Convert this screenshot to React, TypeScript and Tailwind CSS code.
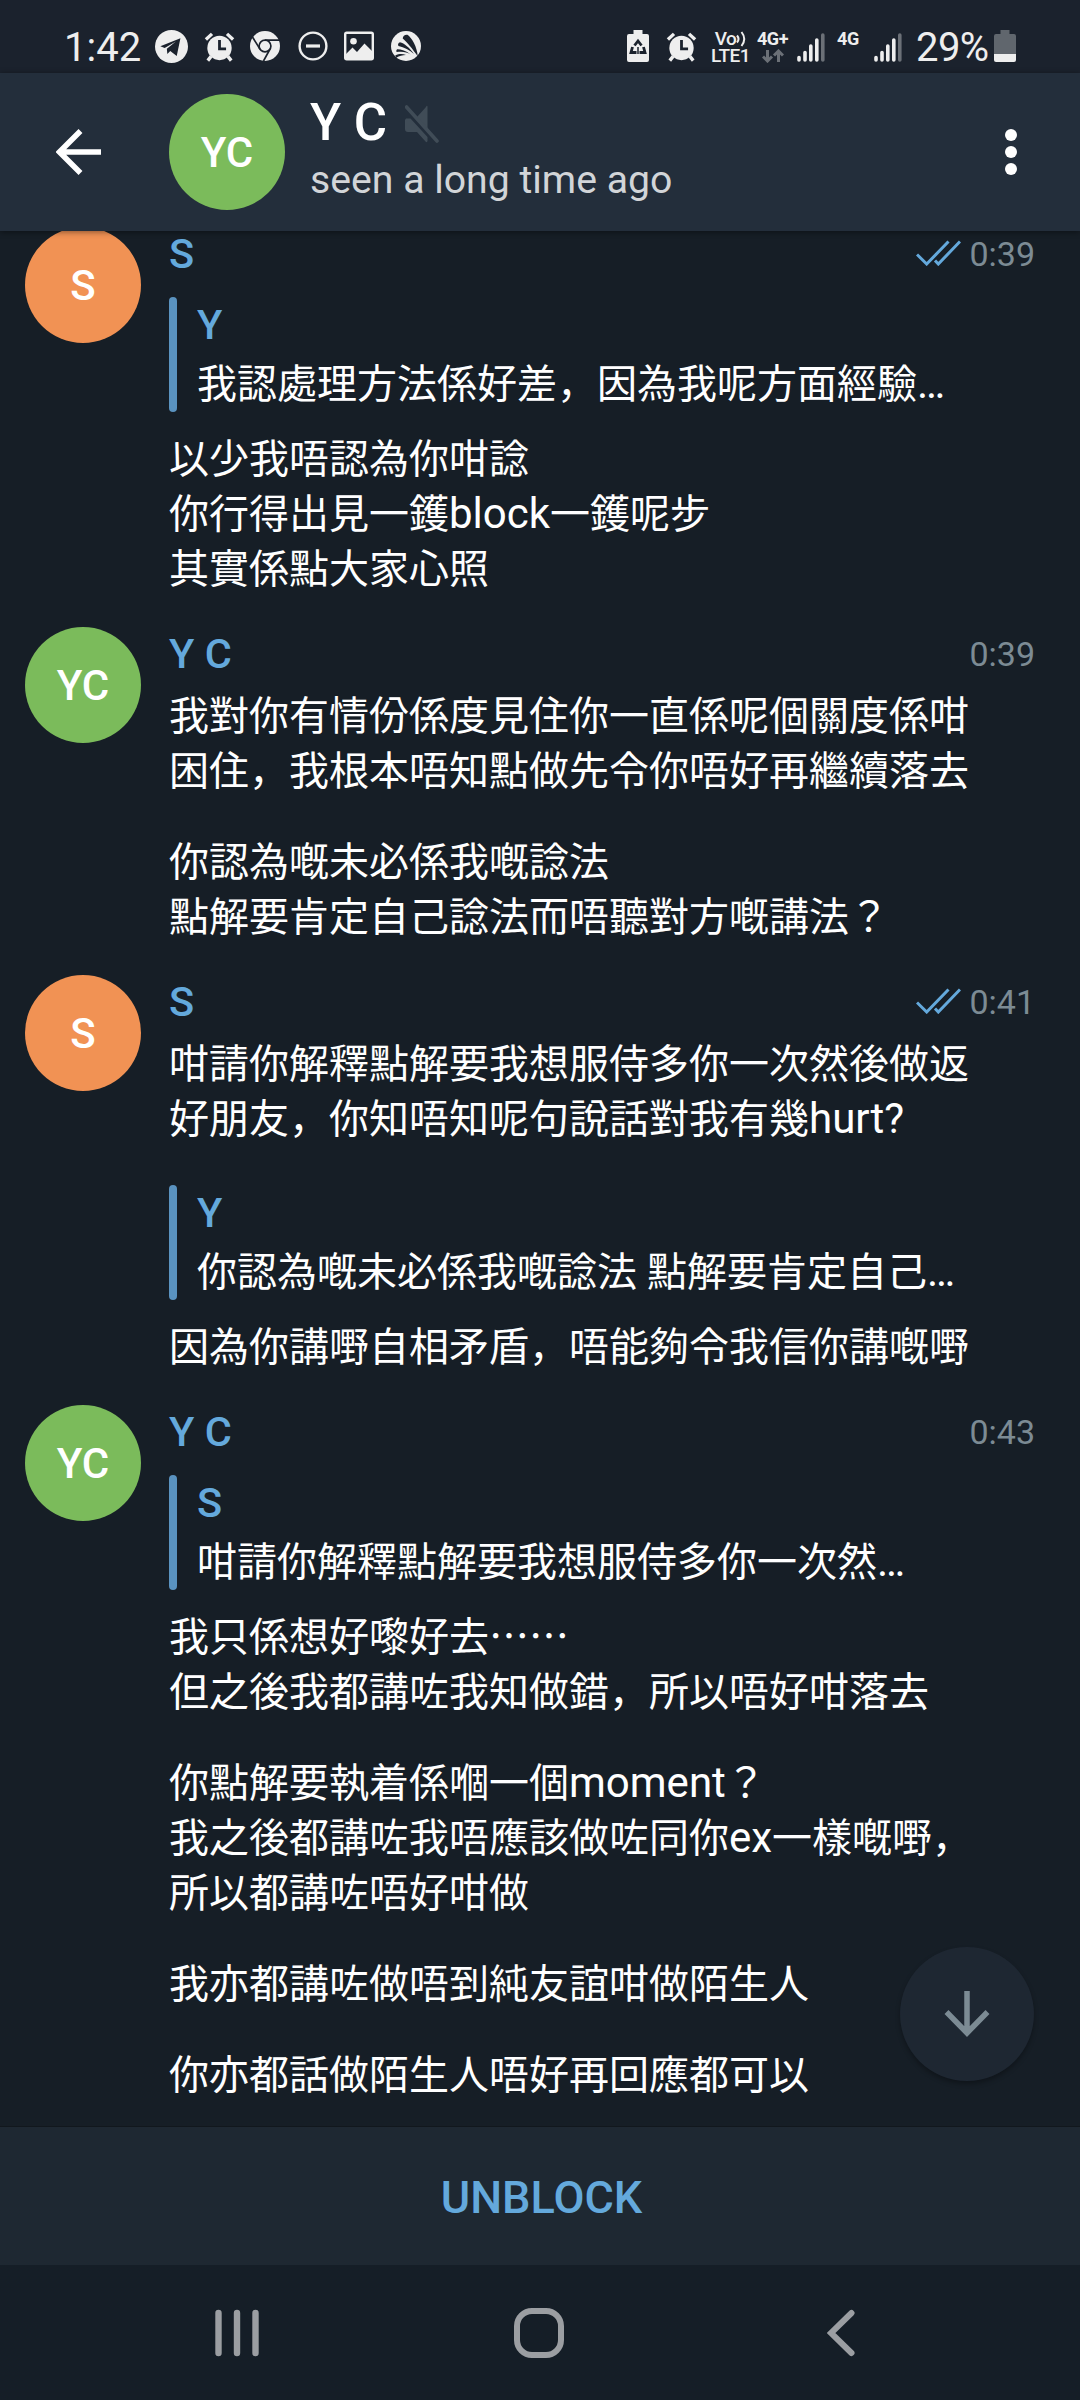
import React from "react";

const TEXT_FONT = "font-['Roboto','Noto_Sans_CJK_JP',sans-serif]";

type Block =
    | { kind: "quote"; author: string; text: string }
    | { kind: "text"; lines: string[] };

interface Message {
    id: number;
    name: string;
    initials: string;
    color: string;
    time: string;
    read?: boolean;
    blocks: Block[];
}

const GREEN = "bg-[#7bbb5b]";
const ORANGE = "bg-[#f19254]";

// An empty string is a blank line inside the message
const MESSAGES: Message[] = [
    {
        id: 1,
        name: "S",
        initials: "S",
        color: ORANGE,
        time: "0:39",
        read: true,
        blocks: [
            { kind: "quote", author: "Y", text: "我認處理方法係好差，因為我呢方面經驗…" },
            { kind: "text", lines: ["以少我唔認為你咁諗", "你行得出見一鑊block一鑊呢步", "其實係點大家心照"] },
        ],
    },
    {
        id: 2,
        name: "Y C",
        initials: "YC",
        color: GREEN,
        time: "0:39",
        blocks: [
            {
                kind: "text",
                lines: [
                    "我對你有情份係度見住你一直係呢個關度係咁",
                    "困住，我根本唔知點做先令你唔好再繼續落去",
                    "",
                    "你認為嘅未必係我嘅諗法",
                    "點解要肯定自己諗法而唔聽對方嘅講法？",
                ],
            },
        ],
    },
    {
        id: 3,
        name: "S",
        initials: "S",
        color: ORANGE,
        time: "0:41",
        read: true,
        blocks: [
            {
                kind: "text",
                lines: ["咁請你解釋點解要我想服侍多你一次然後做返", "好朋友，你知唔知呢句說話對我有幾hurt?"],
            },
            { kind: "quote", author: "Y", text: "你認為嘅未必係我嘅諗法 點解要肯定自己…" },
            { kind: "text", lines: ["因為你講嘢自相矛盾，唔能夠令我信你講嘅嘢"] },
        ],
    },
    {
        id: 4,
        name: "Y C",
        initials: "YC",
        color: GREEN,
        time: "0:43",
        blocks: [
            { kind: "quote", author: "S", text: "咁請你解釋點解要我想服侍多你一次然…" },
            {
                kind: "text",
                lines: [
                    "我只係想好嚟好去⋯⋯",
                    "但之後我都講咗我知做錯，所以唔好咁落去",
                    "",
                    "你點解要執着係嗰一個moment？",
                    "我之後都講咗我唔應該做咗同你ex一樣嘅嘢，",
                    "所以都講咗唔好咁做",
                    "",
                    "我亦都講咗做唔到純友誼咁做陌生人",
                    "",
                    "你亦都話做陌生人唔好再回應都可以",
                ],
            },
        ],
    },
];

function AlarmIcon({ className }: { className?: string }) {
    return (
        <svg viewBox="0 0 32 32" className={className} fill="none">
            <circle cx="16" cy="17" r="13" fill="#eeeeee" />
            <path d="M1.5 8 8 2M30.5 8 24 2" stroke="#eeeeee" strokeWidth="3.6" />
            <path d="M7 26 3.5 30.5M25 26 28.5 30.5" stroke="#eeeeee" strokeWidth="3.6" />
            <path d="M16 8.5V18H23" stroke="#1b222d" strokeWidth="3" />
        </svg>
    );
}

function SignalIcon() {
    return (
        <svg viewBox="0 0 28 30" className="h-[30px] w-7" strokeWidth="3.6" strokeLinecap="round">
            <path d="M2 25.5V28M8 20.5V28M13.8 14V28M19.8 8V28" stroke="#eeeeee" />
            <path d="M25.8 3V28" stroke="#6b7077" />
        </svg>
    );
}

function StatusBar() {
    return (
        <div className="flex h-[73px] shrink-0 items-start bg-[#1b222d] pl-[64px] pt-[30px] text-[#eeeeee]">
            <span className="w-[91px] shrink-0 pt-0.5 text-[40px] leading-8">1:42</span>
            <svg viewBox="0 0 34 34" className="h-[33px] w-[33px]">
                <circle cx="17" cy="17" r="17" fill="#eeeeee" />
                <path d="M5.5 16.7 26.2 8.5 22.4 26.8 15.7 21.6 12.7 24.6 12.2 19.2 21.5 11.8 10 18.6Z" fill="#1b222d" />
            </svg>
            <AlarmIcon className="ml-4 mt-0.5 h-[30px] w-[31px]" />
            <svg viewBox="0 0 32 32" className="ml-[15px] mt-px h-[30px] w-[30px]" fill="none" stroke="#1b222d" strokeWidth="1.8">
                <circle cx="16" cy="16" r="16" fill="#eeeeee" stroke="none" />
                <circle cx="16" cy="16" r="6.3" />
                <path d="M16 9.7H31M10.6 19.2 2.6 6.4M21.4 19.2 14.4 32" />
            </svg>
            <svg viewBox="0 0 30 30" className="ml-[18px] mt-px h-[30px] w-[30px]" fill="none" stroke="#eeeeee">
                <circle cx="15" cy="15" r="13.4" strokeWidth="2.4" />
                <path d="M8 15H22" strokeWidth="3.2" />
            </svg>
            <svg viewBox="0 0 30 30" className="ml-4 mt-px h-[30px] w-[30px]">
                <rect x="1.2" y="1.7" width="27.6" height="26.6" rx="1.5" fill="none" stroke="#eeeeee" strokeWidth="2.4" />
                <circle cx="9.5" cy="10.3" r="3.3" fill="#eeeeee" />
                <path d="M2 23 8.5 16.5 13 21 20.5 12.5 28 20V28H2Z" fill="#eeeeee" />
            </svg>
            {/* Disc with dark fins fanning out from the lower right */}
            <svg viewBox="0 0 32 32" className="ml-[17px] mt-px h-[30px] w-[30px]">
                <circle cx="16" cy="16" r="16" fill="#eeeeee" />
                <path
                    d="M28.5 27C28 17 22 7 17.5 4C15 3.5 12.5 5.5 12.5 8C17 12 23 19 28.5 27ZM24.5 24.5C20 18 14 13 9.5 12C7.5 13 7 14.5 8 16C14 17.5 20 20.5 24.5 24.5ZM21 25C16 21 11 19.5 6.5 19.5C5.5 20.5 5.5 21.5 6 22.5C12 21.5 17 22.5 21 25ZM16 25.5C12 24 9 24 4.5 26L5.5 28.5C9 26.5 12 25.5 16 25.5Z"
                    fill="#1b222d"
                />
            </svg>

            <div className="ml-[206px] flex items-start">
                <svg viewBox="0 0 22 32" className="h-8 w-[22px]">
                    <path d="M6.5 0H15.5V4H20Q22 4 22 6V30Q22 32 20 32H2Q0 32 0 30V6Q0 4 2 4H6.5Z" fill="#eeeeee" />
                    <g fill="none" stroke="#1b222d" strokeWidth="2.8">
                        <path d="M7.5 15.5 11 11 14.5 15.5" />
                        <path d="M5.5 17 4 22.5H9.5M16.5 17 18 22.5H12.5" />
                        <path d="M11 17V24" strokeWidth="1.5" />
                    </g>
                </svg>
                <AlarmIcon className="ml-4 mt-0.5 h-[30px] w-[33px]" />
                <div className="ml-[13px] w-[39px] text-center text-[19px] font-medium leading-[17px] tracking-tight">
                    <div className="flex items-center justify-center">
                        Vo
                        <svg viewBox="0 0 10 16" className="h-4 w-2.5" fill="none" stroke="#eeeeee" strokeWidth="2">
                            <path d="M1 4.5Q4 8 1 11.5M5.5 1Q11 8 5.5 15" />
                        </svg>
                    </div>
                    <div>LTE1</div>
                </div>
                <div className="ml-[7px] flex w-[31px] flex-col items-center">
                    <span className="text-[18px] font-bold leading-[18px] tracking-tight">4G+</span>
                    <svg viewBox="0 0 22 14" className="mt-px h-3.5 w-[22px]" fill="none" stroke="#6b7077" strokeWidth="3">
                        <path d="M5.5 1V12M1 7.5 5.5 12 10 7.5M16.5 13V2M12 6.5 16.5 2 21 6.5" />
                    </svg>
                </div>
                <div className="ml-[9px] mt-0.5">
                    <SignalIcon />
                </div>
                <span className="ml-3 w-[25px] text-[18px] font-bold leading-[18px] tracking-tight">4G</span>
                <div className="ml-3 mt-0.5">
                    <SignalIcon />
                </div>
                <span className="ml-[14px] w-[78px] pt-0.5 text-[40px] leading-8 tracking-[-0.6px]">29%</span>
                <svg viewBox="0 0 22 32" className="h-8 w-[22px] shrink-0">
                    <path d="M6.5 0H15.5V4H20Q22 4 22 6V24H0V6Q0 4 2 4H6.5Z" fill="#60666d" />
                    <path d="M0 24H22V30Q22 32 20 32H2Q0 32 0 30Z" fill="#eeeeee" />
                </svg>
            </div>
        </div>
    );
}

function Avatar({ initials, color }: { initials: string; color: string }) {
    return (
        <div
            className={`flex size-[116px] shrink-0 items-center justify-center rounded-full text-[42px] font-medium text-white ${color}`}
        >
            {initials}
        </div>
    );
}

function ChatHeader() {
    return (
        <header className="relative z-10 flex h-[158px] shrink-0 items-center bg-[#232e3b] pl-14 shadow-[0_1px_6px_rgba(0,0,0,0.45)]">
            <svg viewBox="0 0 46 46" className="h-[46px] w-[46px]" fill="none" stroke="#ffffff" strokeWidth="5.5">
                <path d="M3.5 23H45M24.5 2 3.5 23 24.5 44" />
            </svg>
            <div className="ml-[67px]">
                <Avatar initials="YC" color={GREEN} />
            </div>
            <div className="ml-[25px] flex-1 pb-1.5">
                <div className="flex h-[60px] items-center">
                    <h1 className="text-[51px] font-medium leading-[60px] text-white">Y C</h1>
                    <svg viewBox="0 0 34 38" className="ml-[18px] mt-[3px] h-[38px] w-[34px]">
                        <path d="M22.5 1.5V24L12 12 21 2Q22 0 22.5 1.5ZM1 13.5H5.5L22.5 32V36Q22 38 20.5 36.5L12 27H3Q0 27 0 24V15Z" fill="#404c57" />
                        <path d="M1.5 2 32 36" stroke="#404c57" strokeWidth="3.6" strokeLinecap="round" />
                    </svg>
                </div>
                <p className="mt-px text-[39.2px] leading-[52px] text-[#d2d5d8]">seen a long time ago</p>
            </div>
            <svg viewBox="0 0 12 46" className="mr-[63px] h-[46px] w-3" fill="#ffffff">
                <circle cx="6" cy="6" r="6" />
                <circle cx="6" cy="23" r="6" />
                <circle cx="6" cy="40" r="6" />
            </svg>
        </header>
    );
}

function ReadTicks() {
    return (
        <svg viewBox="0 0 45 26" className="mb-[3px] mr-2 h-[26px] w-[45px]" fill="none" stroke="#64a9dc" strokeWidth="3">
            <path d="M1 14.5 10.7 24 32.5 1.5M19 20.5 22.3 24 44 1.5" />
        </svg>
    );
}

// Latin runs are set a little larger than the Chinese around them
function MixedText({ text }: { text: string }) {
    return (
        <>
            {text.split(/([a-z?…]+)/).map((part, i) =>
                i % 2 === 1 ? (
                    <span key={i} className="text-[42px] leading-none">
                        {part}
                    </span>
                ) : (
                    part
                )
            )}
        </>
    );
}

function MessageBlock({ block, first }: { block: Block; first: boolean }) {
    if (block.kind === "quote") {
        return (
            <div className={`mb-[18px] flex h-[115px] gap-5 ${first ? "mt-4" : "mt-10"}`}>
                <div className="w-2 rounded-full bg-[#5a93c0]" />
                <div className="text-[40px]">
                    <div className="h-[54px] text-[41.5px] font-medium leading-[55px] text-[#64a9dc]">{block.author}</div>
                    <div className="mt-1 h-[55px] whitespace-nowrap leading-[59px]">
                        <MixedText text={block.text} />
                    </div>
                </div>
            </div>
        );
    }

    return (
        <div className={`text-[40px] leading-[59px] ${first ? "mt-[6px]" : ""}`}>
            {block.lines.map((line, i) =>
                line === "" ? (
                    <div key={i} className="h-9" />
                ) : (
                    <div key={i} className="h-[55px] whitespace-nowrap">
                        <MixedText text={line} />
                    </div>
                )
            )}
        </div>
    );
}

function MessageRow({ message }: { message: Message }) {
    return (
        <article className="flex gap-7 pl-[25px] pr-[45px] text-white">
            <Avatar initials={message.initials} color={message.color} />
            <div className="flex-1">
                <div className="flex h-[54px] items-center">
                    <span className="flex-1 text-[41.5px] font-medium leading-[46px] text-[#64a9dc]">{message.name}</span>
                    {message.read && <ReadTicks />}
                    <span className="text-[34px] leading-[46px] text-[#7c8b94]">{message.time}</span>
                </div>
                {message.blocks.map((block, i) => (
                    <MessageBlock key={i} block={block} first={i === 0} />
                ))}
            </div>
        </article>
    );
}

function NavigationBar() {
    return (
        <nav className="flex h-[135px] shrink-0 items-center bg-[#151e27] pl-[215px]">
            <svg viewBox="0 0 45 48" className="h-12 w-[45px]" stroke="#9b9ea2" strokeWidth="6.4" strokeLinecap="round">
                <path d="M3.5 4V44M22 4V44M40.5 4V44" />
            </svg>
            <svg viewBox="0 0 50 50" className="ml-[254px] size-[50px]">
                <rect x="3" y="3" width="44" height="44" rx="15" fill="none" stroke="#9b9ea2" strokeWidth="6" />
            </svg>
            <svg viewBox="0 0 28 48" className="ml-[263px] h-12 w-7" fill="none" stroke="#9b9ea2" strokeWidth="6" strokeLinecap="round">
                <path d="M24.5 4 4 24 24.5 44" />
            </svg>
        </nav>
    );
}

export default function App() {
    return (
        <div className={`flex h-[2400px] w-[1080px] flex-col overflow-hidden bg-[#161e26] ${TEXT_FONT}`}>
            <StatusBar />
            <ChatHeader />
            <main className="relative min-h-0 flex-1 overflow-hidden">
                <div className="-mt-1 flex flex-col gap-8">
                    {MESSAGES.map((message) => (
                        <MessageRow key={message.id} message={message} />
                    ))}
                </div>
                {/* Scroll-to-bottom button floats over the conversation */}
                <button className="absolute bottom-[45px] right-[46px] flex size-[134px] items-center justify-center rounded-full bg-[#1e2732] shadow-[0_3px_5px_rgba(0,0,0,0.3)]">
                    <svg viewBox="0 0 46 46" className="size-[46px]" fill="none" stroke="#7c8b94" strokeWidth="5.5">
                        <path d="M23 0V42M2.5 21 23 42 43.5 21" />
                    </svg>
                </button>
            </main>
            <button className="flex h-[139px] shrink-0 items-center justify-center border-t border-[#11171d] bg-[#1e2832] pl-[3px] pt-[3px] text-[45px] font-medium text-[#64a9dc]">
                UNBLOCK
            </button>
            <NavigationBar />
        </div>
    );
}
